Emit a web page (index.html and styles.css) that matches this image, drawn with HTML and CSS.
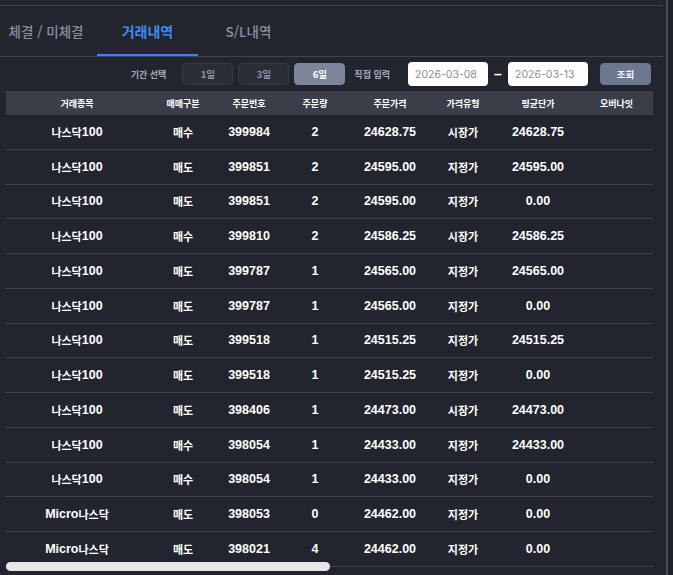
FILE: index.html
```html
<!DOCTYPE html>
<html lang="ko">
<head>
<meta charset="utf-8">
<link rel="stylesheet" href="styles.css">
</head>
<body>
<div class="main">
  <div class="tabs">
    <div class="tab">체결 / 미체결</div>
    <div class="tab active">거래내역</div>
    <div class="tab">S/L내역</div>
  </div>
  <div class="filter">
    <span class="label">기간 선택</span>
    <div class="btns">
      <button class="pbtn">1일</button>
      <button class="pbtn">3일</button>
      <button class="pbtn on">6일</button>
    </div>
    <span class="label direct">직접 입력</span>
    <div class="date">2026-03-08</div>
    <span class="dash">–</span>
    <div class="date">2026-03-13</div>
    <button class="search">조회</button>
  </div>
  <div class="table">
    <div class="row head">
      <div>거래종목</div><div>매매구분</div><div>주문번호</div><div>주문량</div><div>주문가격</div><div>가격유형</div><div>평균단가</div><div>오버나잇</div>
    </div>
    <div class="row"><div><span class="k">나스닥</span>100</div><div class="k">매수</div><div>399984</div><div>2</div><div>24628.75</div><div class="k">시장가</div><div>24628.75</div><div></div></div>
    <div class="row"><div><span class="k">나스닥</span>100</div><div class="k">매도</div><div>399851</div><div>2</div><div>24595.00</div><div class="k">지정가</div><div>24595.00</div><div></div></div>
    <div class="row"><div><span class="k">나스닥</span>100</div><div class="k">매도</div><div>399851</div><div>2</div><div>24595.00</div><div class="k">지정가</div><div>0.00</div><div></div></div>
    <div class="row"><div><span class="k">나스닥</span>100</div><div class="k">매수</div><div>399810</div><div>2</div><div>24586.25</div><div class="k">시장가</div><div>24586.25</div><div></div></div>
    <div class="row"><div><span class="k">나스닥</span>100</div><div class="k">매도</div><div>399787</div><div>1</div><div>24565.00</div><div class="k">지정가</div><div>24565.00</div><div></div></div>
    <div class="row"><div><span class="k">나스닥</span>100</div><div class="k">매도</div><div>399787</div><div>1</div><div>24565.00</div><div class="k">지정가</div><div>0.00</div><div></div></div>
    <div class="row"><div><span class="k">나스닥</span>100</div><div class="k">매도</div><div>399518</div><div>1</div><div>24515.25</div><div class="k">지정가</div><div>24515.25</div><div></div></div>
    <div class="row"><div><span class="k">나스닥</span>100</div><div class="k">매도</div><div>399518</div><div>1</div><div>24515.25</div><div class="k">지정가</div><div>0.00</div><div></div></div>
    <div class="row"><div><span class="k">나스닥</span>100</div><div class="k">매도</div><div>398406</div><div>1</div><div>24473.00</div><div class="k">시장가</div><div>24473.00</div><div></div></div>
    <div class="row"><div><span class="k">나스닥</span>100</div><div class="k">매수</div><div>398054</div><div>1</div><div>24433.00</div><div class="k">지정가</div><div>24433.00</div><div></div></div>
    <div class="row"><div><span class="k">나스닥</span>100</div><div class="k">매수</div><div>398054</div><div>1</div><div>24433.00</div><div class="k">지정가</div><div>0.00</div><div></div></div>
    <div class="row"><div>Micro<span class="k">나스닥</span></div><div class="k">매도</div><div>398053</div><div>0</div><div>24462.00</div><div class="k">지정가</div><div>0.00</div><div></div></div>
    <div class="row"><div>Micro<span class="k">나스닥</span></div><div class="k">매도</div><div>398021</div><div>4</div><div>24462.00</div><div class="k">지정가</div><div>0.00</div><div></div></div>
  </div>
  <div class="hscroll"></div>
</div>
<div class="gutter"></div>
<div class="vline"></div>
<div class="outside"></div>
</body>
</html>
```
FILE: styles.css
```css
html, body {
  margin: 0;
  padding: 0;
  height: 575px;
  overflow: hidden;
}
body {
  display: flex;
  background: #22252d;
  font-family: "Liberation Sans", "Noto Sans CJK KR", sans-serif;
  color: #ffffff;
}
.main {
  position: relative;
  width: 663px;
  flex: none;
  padding-top: 5px;
}
.gutter {
  width: 3px;
  flex: none;
}
.vline {
  width: 2px;
  flex: none;
  background: #474d5c;
}
.outside {
  flex: 1;
  background: #1f2228;
}
.tabs {
  display: flex;
  height: 50px;
  border-top: 1px solid #3f434e;
  border-bottom: 1px solid #3f434e;
}
.tab {
  width: 101px;
  box-sizing: border-box;
  display: flex;
  align-items: center;
  justify-content: center;
  font-family: "Noto Sans CJK KR", sans-serif;
  font-size: 13.5px;
  font-weight: 500;
  color: #8891a4;
  border-bottom: 2px solid transparent;
  padding-top: 2px;
  white-space: nowrap;
}
.tab:first-child {
  width: 97px;
  padding-right: 5px;
}
.tab.active {
  color: #3f8cf3;
  font-weight: 700;
  font-size: 14px;
  border-bottom-color: #3b82f6;
}
.filter {
  display: flex;
  align-items: center;
  justify-content: flex-end;
  height: 34px;
  padding-right: 12px;
}
.label {
  font-family: "Noto Sans CJK KR", sans-serif;
  font-size: 9px;
  font-weight: 700;
  color: #a3abbb;
  margin-right: 16px;
}
.label.direct {
  margin-left: 9px;
  margin-right: 18px;
}
.btns {
  display: flex;
  gap: 5px;
}
.pbtn, .search {
  height: 22px;
  border-radius: 4px;
  border: 1px solid #363b46;
  background: #2a2e37;
  color: #8e97aa;
  font-family: "Noto Sans CJK KR", sans-serif;
  font-size: 9.5px;
  font-weight: 700;
  padding: 0;
  width: 51px;
}
.pbtn.on {
  background: #7c8599;
  border-color: #7c8599;
  color: #ffffff;
}
.search {
  width: 51px;
  margin-left: 12px;
  background: #6d7790;
  border-color: #6d7790;
  color: #f2f4f8;
}
.date {
  width: 80px;
  height: 24px;
  box-sizing: border-box;
  background: #ffffff;
  border-radius: 4px;
  color: #8a8e97;
  font-family: "Inter", "Liberation Sans", sans-serif;
  font-size: 10.5px;
  display: flex;
  align-items: center;
  padding-left: 7px;
}
.dash {
  width: 20px;
  text-align: center;
  font-size: 14px;
  font-weight: 700;
  color: #ffffff;
}
.table {
  margin-left: 6px;
  width: 647px;
}
.row {
  display: grid;
  grid-template-columns: 142px 70px 62px 70px 80px 66px 84px 73px;
  height: 34.75px;
  box-sizing: border-box;
  border-bottom: 1px solid #3d414b;
  font-size: 12.5px;
  font-weight: 700;
}
.row > div {
  display: flex;
  align-items: center;
  justify-content: center;
  white-space: nowrap;
}
.row .k, .row.head > div {
  font-family: "Noto Sans CJK KR", sans-serif;
}
.k {
  font-size: 11px;
}
.row.head {
  height: 24px;
  background: #3a3e48;
  border-bottom: none;
  font-family: "Noto Sans CJK KR", sans-serif;
  font-size: 9px;
}
.hscroll {
  position: absolute;
  left: 6px;
  top: 562px;
  width: 324px;
  height: 9px;
  border-radius: 5px;
  background: #e6e7e6;
}
```
